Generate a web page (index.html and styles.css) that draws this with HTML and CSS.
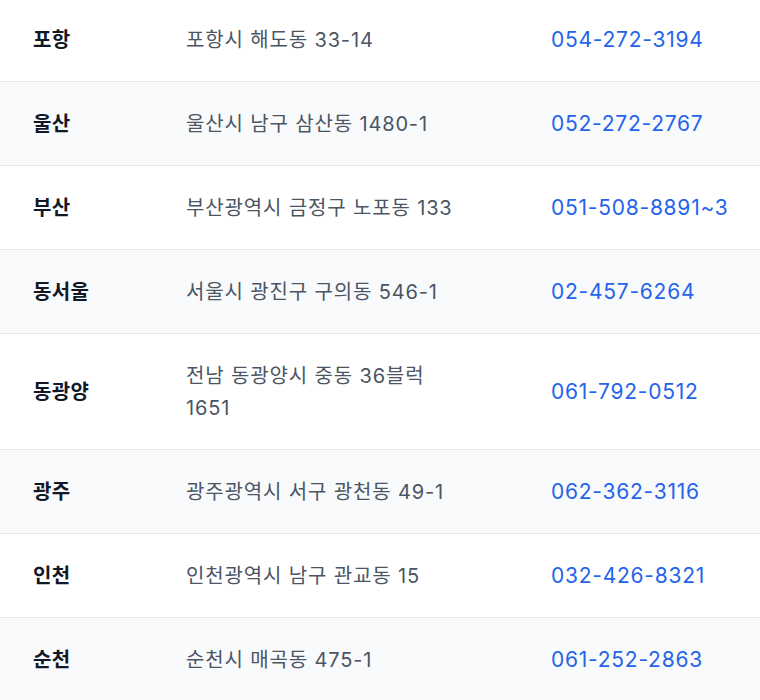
FILE: index.html
```html
<!DOCTYPE html>
<html lang="ko">
<head>
<meta charset="utf-8">
<link rel="stylesheet" href="styles.css">
</head>
<body>
<div class="table">
  <div class="row"><div class="name">포항</div><div class="addr">포항시 해도동 33-14</div><div class="tel">054-272-3194</div></div>
  <div class="row alt"><div class="name">울산</div><div class="addr">울산시 남구 삼산동 1480-1</div><div class="tel">052-272-2767</div></div>
  <div class="row"><div class="name">부산</div><div class="addr">부산광역시 금정구 노포동 133</div><div class="tel">051-508-8891~3</div></div>
  <div class="row alt"><div class="name">동서울</div><div class="addr">서울시 광진구 구의동 546-1</div><div class="tel">02-457-6264</div></div>
  <div class="row"><div class="name">동광양</div><div class="addr">전남 동광양시 중동 36블럭 1651</div><div class="tel">061-792-0512</div></div>
  <div class="row alt"><div class="name">광주</div><div class="addr">광주광역시 서구 광천동 49-1</div><div class="tel">062-362-3116</div></div>
  <div class="row"><div class="name">인천</div><div class="addr">인천광역시 남구 관교동 15</div><div class="tel">032-426-8321</div></div>
  <div class="row alt"><div class="name">순천</div><div class="addr">순천시 매곡동 475-1</div><div class="tel">061-252-2863</div></div>
</div>
</body>
</html>
```
FILE: styles.css
```css
html, body {
  margin: 0;
  padding: 0;
  background: #ffffff;
  overflow: hidden;
}
body {
  font-family: Inter, "Noto Sans CJK KR", sans-serif;
  font-size: 20px;
  line-height: 32px;
}
.table {
  margin-top: -2px;
}
.row {
  display: grid;
  grid-template-columns: 153px 365px 1fr;
  padding: 26px 0 25px 33px;
  border-bottom: 1px solid #e5e7eb;
  align-items: center;
}
.row.alt {
  background: #f9fafb;
}
.name {
  color: #111827;
  font-weight: 600;
  letter-spacing: 0.3px;
}
.addr {
  color: #4b5563;
  max-width: 284px;
  letter-spacing: 0.85px;
}
.tel {
  color: #2563eb;
  white-space: nowrap;
  font-size: 21px;
  letter-spacing: 0.75px;
}
```
